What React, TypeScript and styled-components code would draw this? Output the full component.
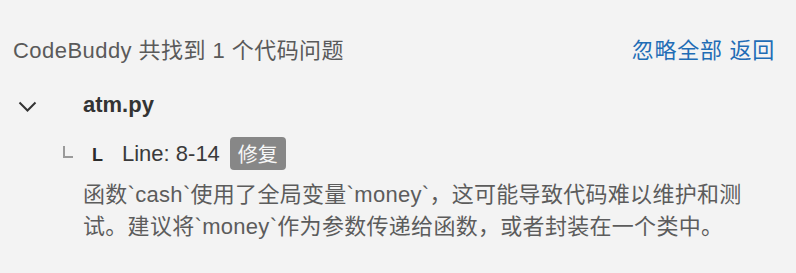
import * as React from "react";
import styled, { createGlobalStyle } from "styled-components";

const GlobalStyle = createGlobalStyle`
  html, body {
    margin: 0;
    padding: 0;
    background: #f3f3f3;
  }
  body {
    font-family: "Liberation Sans", Arial, "Noto Sans CJK SC", sans-serif;
  }
`;

const Panel = styled.div`
  width: 796px;
  height: 273px;
  box-sizing: border-box;
  padding: 36px 21px 0 13px;
  background: #f3f3f3;
  overflow: hidden;
`;

const Header = styled.div`
  display: flex;
  align-items: center;
  justify-content: space-between;
  height: 30px;
  font-size: 22px;
  line-height: 30px;
`;

const Summary = styled.div`
  color: #5a5a5a;
  letter-spacing: 0.45px;
`;

const Actions = styled.div`
  display: flex;
  gap: 7px;
`;

const Link = styled.a`
  color: #1f6db6;
  cursor: pointer;
  text-decoration: none;
  letter-spacing: 0.7px;
`;

const FileRow = styled.div`
  display: flex;
  align-items: center;
  height: 30px;
  margin-top: 24px;
`;

const Toggle = styled.span`
  display: flex;
  align-items: center;
  width: 70px;
  padding-left: 5px;
  padding-top: 2px;
  box-sizing: border-box;
  color: #333;
`;

const FileName = styled.span`
  font-size: 22px;
  line-height: 30px;
  font-weight: bold;
  color: #333;
`;

const IssueRow = styled.div`
  display: flex;
  align-items: center;
  height: 33px;
  margin-top: 17px;
  padding-left: 50px;
`;

const TreeMark = styled.span`
  width: 10px;
  height: 12px;
  margin-top: -4px;
  border-left: 2px solid #9a9a9a;
  border-bottom: 2px solid #9a9a9a;
  box-sizing: border-box;
`;

const Kind = styled.span`
  margin-left: 19px;
  font-size: 18px;
  font-weight: bold;
  color: #2b2b2b;
  line-height: 33px;
  padding-top: 3px;
`;

const LineRange = styled.span`
  margin-left: 19px;
  font-size: 22px;
  line-height: 33px;
  color: #3a3a3a;
`;

const FixButton = styled.button`
  margin-left: 10px;
  height: 33px;
  width: 56px;
  padding: 0;
  border: none;
  border-radius: 4px;
  background: #878787;
  color: #f7f7f7;
  font-family: "Liberation Sans", "Noto Sans CJK SC", sans-serif;
  font-size: 20px;
  cursor: pointer;
`;

const Message = styled.p`
  margin: 9px 0 0 70px;
  width: 680px;
  font-size: 22px;
  line-height: 32px;
  letter-spacing: 0.3px;
  color: #5c5c5c;
`;

const Chevron = () => (
  <svg width="19" height="11" viewBox="0 0 19 11" fill="none">
    <path d="M1.5 1.5 L9.5 9.5 L17.5 1.5" stroke="currentColor" strokeWidth="2" />
  </svg>
);

export default function App() {
  return (
    <>
      <GlobalStyle />
      <Panel>
        <Header>
          <Summary>CodeBuddy 共找到 1 个代码问题</Summary>
          <Actions>
            <Link>忽略全部</Link>
            <Link>返回</Link>
          </Actions>
        </Header>
        <FileRow>
          <Toggle>
            <Chevron />
          </Toggle>
          <FileName>atm.py</FileName>
        </FileRow>
        <IssueRow>
          <TreeMark />
          <Kind>L</Kind>
          <LineRange>Line: 8-14</LineRange>
          <FixButton>修复</FixButton>
        </IssueRow>
        <Message>
          函数`cash`使用了全局变量`money`，这可能导致代码难以维护和测试。建议将`money`作为参数传递给函数，或者封装在一个类中。
        </Message>
      </Panel>
    </>
  );
}
